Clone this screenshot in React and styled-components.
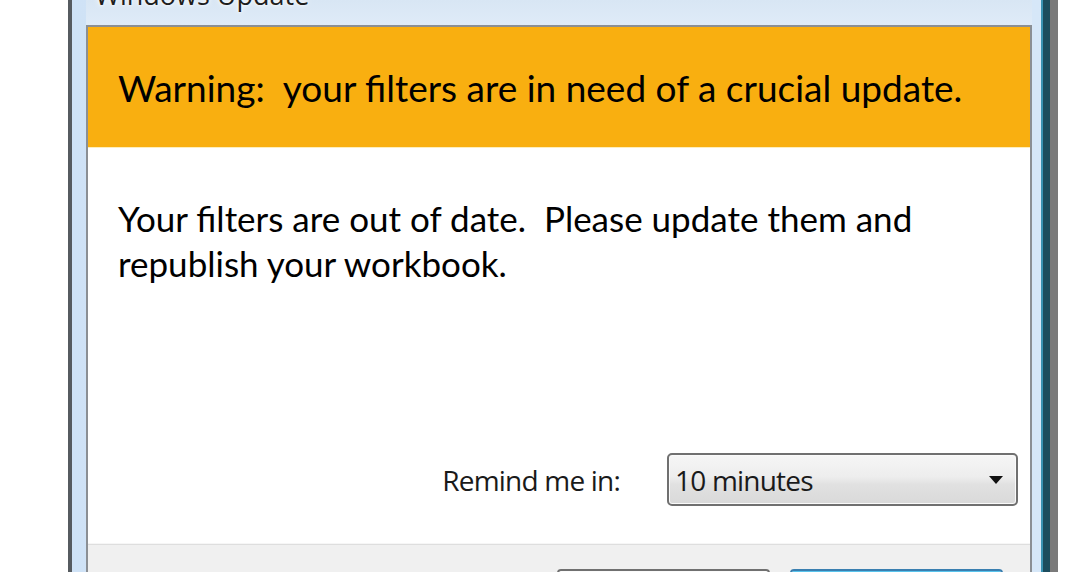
import React from "react";
import styled, { createGlobalStyle } from "styled-components";

const Global = createGlobalStyle`
  html, body { margin: 0; padding: 0; background: #fff; overflow: hidden; }
  body { font-family: "Lato", "Open Sans", sans-serif; }
`;

const Page = styled.div`
  width: 1089px;
  height: 572px;
  overflow: hidden;
  background: #fff;
`;

const Window = styled.div`
  margin-left: 68px;
  width: 982px;
  height: 620px;
  box-sizing: border-box;
  border-left: 4px solid #565b60;
  border-right: 7px solid #1c4d5e;
  box-shadow: inset -2px 0 0 #3a92b2, 8px 0 0 0 #7a7a7a;
  background: linear-gradient(to right, #cfe2f6, #dbe9f8 50%, #d6e7f8);
  padding: 0 11px 0 14px;
  display: flex;
  flex-direction: column;
`;

const TitleBar = styled.div`
  height: 25px;
  flex: none;
  display: flex;
  align-items: flex-end;
  padding-left: 9px;
  background: linear-gradient(to bottom, #d8e6f4, #dfebf8);
`;

const Title = styled.span`
  font-family: "Open Sans", "Noto Sans", sans-serif;
  font-size: 27px;
  line-height: 27px;
  margin-bottom: 17px;
  color: #1e1e1e;
  text-shadow: 0 0 6px #fff, 0 0 3px #fff;
  white-space: nowrap;
`;

const Panel = styled.div`
  flex: 1;
  display: flex;
  flex-direction: column;
  border: 2px solid #8b8f94;
  border-bottom: none;
  background: #fff;
`;

const Header = styled.div`
  height: 120px;
  flex: none;
  display: flex;
  align-items: center;
  padding: 0 30px;
  background: #f9af10;
  border-bottom: 1px solid #fdeebd;
  color: #000;
  font-size: 37px;
  white-space: pre;
`;

const Content = styled.div`
  height: 395px;
  flex: none;
  display: flex;
  flex-direction: column;
  border-bottom: 1px solid #f6f6f6;
`;

const Message = styled.p`
  margin: 0;
  padding: 48px 30px 0;
  font-size: 35px;
  line-height: 45px;
  color: #000;
  white-space: pre-wrap;
`;

const RemindRow = styled.div`
  margin-top: auto;
  margin-bottom: 37px;
  padding-right: 12px;
  display: flex;
  justify-content: flex-end;
  align-items: center;
  gap: 47px;
`;

const Label = styled.span`
  font-family: "Open Sans", "Noto Sans", sans-serif;
  font-size: 28px;
  letter-spacing: -0.8px;
  color: #1a1a1a;
`;

const Select = styled.div`
  width: 351px;
  height: 53px;
  box-sizing: border-box;
  display: flex;
  align-items: center;
  justify-content: space-between;
  padding: 0 13px 0 6px;
  border: 2px solid #707070;
  border-radius: 5px;
  box-shadow: inset 0 0 0 1px #fafafa;
  background: linear-gradient(to bottom, #f6f6f6 0%, #ededed 45%, #e1e1e1 60%, #d9d9d9 100%);
  font-family: "Open Sans", "Noto Sans", sans-serif;
  font-size: 28px;
  letter-spacing: -0.8px;
  color: #1a1a1a;
`;

const Footer = styled.div`
  flex: 1;
  display: flex;
  justify-content: flex-end;
  align-items: flex-start;
  gap: 20px;
  padding: 24px 27px 0 0;
  background: #f0f0f0;
  border-top: 1px solid #dedede;
`;

const Button = styled.div`
  width: 213px;
  height: 42px;
  box-sizing: border-box;
  border-radius: 4px;
  border: 2px solid ${(p) => (p.$primary ? "#3a7fb0" : "#707070")};
  box-shadow: inset 0 0 0 ${(p) => (p.$primary ? "3px #58c3ec" : "1px #fbfbfb")};
  background: ${(p) =>
    p.$primary
      ? "linear-gradient(#e6f5fc, #d2ecf9)"
      : "linear-gradient(#f3f3f3, #ebebeb 45%, #dddddd 55%, #cfcfcf)"};
`;

const Arrow = () => (
  <svg width="14" height="8" viewBox="0 0 14 8">
    <polygon points="0,0 14,0 7,8" fill="#111" />
  </svg>
);

export default function App() {
  return (
    <Page>
      <Global />
      <Window>
        <TitleBar>
          <Title>Windows Update</Title>
        </TitleBar>
        <Panel>
          <Header>Warning:  your filters are in need of a crucial update.</Header>
          <Content>
            <Message>
              {"Your filters are out of date.  Please update them and\nrepublish your workbook."}
            </Message>
            <RemindRow>
              <Label>Remind me in:</Label>
              <Select>
                <span>10 minutes</span>
                <Arrow />
              </Select>
            </RemindRow>
          </Content>
          <Footer>
            <Button />
            <Button $primary />
          </Footer>
        </Panel>
      </Window>
    </Page>
  );
}
